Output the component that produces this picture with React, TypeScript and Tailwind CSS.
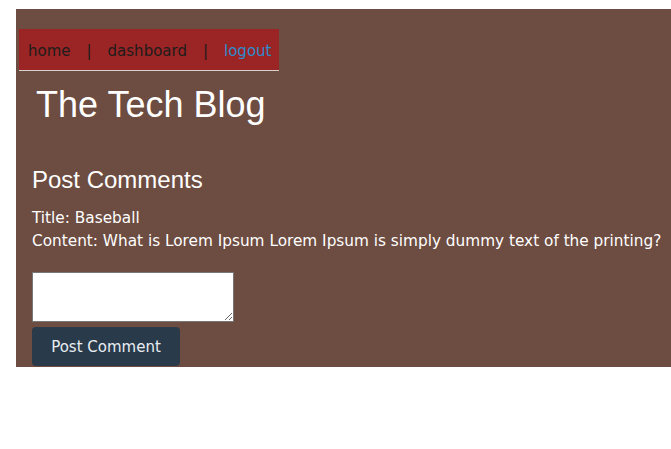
const App = () => {
    return (
        <div className="pt-[9px] pl-4 bg-white min-h-screen">
            <div className="bg-[#6d4c41] pt-5 pl-[3px] pb-px font-[DejaVu_Sans,Verdana,sans-serif]">
                <nav className="w-[260px] h-[42px] bg-[#9b2424] border-b border-[#d8d0cc] flex items-center pt-[3px] pl-[9px] text-[15px] text-[#1c1c1c]">
                    <a href="/">home</a>
                    <span className="px-4">|</span>
                    <a href="/dashboard">dashboard</a>
                    <span className="px-4">|</span>
                    <a href="/logout" className="text-[#2d8ccc]">logout</a>
                </nav>
                <h1 className="pl-[17px] mt-[12px] text-[36px] leading-[44px] text-white font-[Liberation_Sans,Arial,sans-serif]">The Tech Blog</h1>
                <section className="pl-[13px] mt-[39px]">
                    <h2 className="text-2xl leading-7 text-white font-[Liberation_Sans,Arial,sans-serif]">Post Comments</h2>
                    <div className="mt-[13px] text-[15.3px] leading-[23px] text-white">
                        <p>Title: Baseball</p>
                        <p>Content: What is Lorem Ipsum Lorem Ipsum is simply dummy text of the printing?</p>
                    </div>
                    <form className="mt-[19px] flex flex-col items-start">
                        <textarea className="w-[202px] h-[50px] bg-white border border-[#777] block"></textarea>
                        <button type="button" className="mt-[5px] w-[148px] h-[39px] pt-[2px] rounded bg-[#293a4b] text-[15px] text-[#e8edf2]">Post Comment</button>
                    </form>
                </section>
            </div>
        </div>
    )
}

export default App
